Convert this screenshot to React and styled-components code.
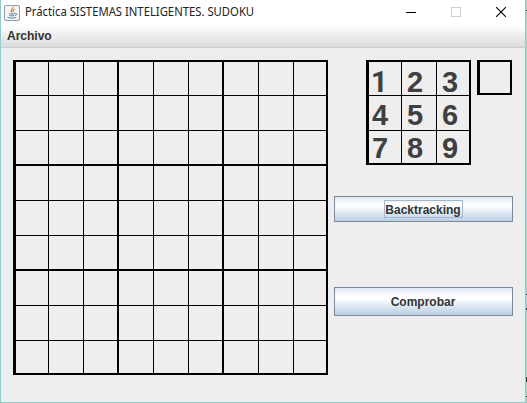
import React from "react";
import styled, { createGlobalStyle } from "styled-components";

const Global = createGlobalStyle`
  * { box-sizing: border-box; }
  body { margin: 0; background: #fff; overflow: hidden; }
`;
const Desktop = styled.div`
  width: 527px; height: 403px; display: flex; background: #a9cfca;
  font-family: "Liberation Sans", Arial, sans-serif;
`;
const DesktopEdge = styled.svg`
  display: block; flex: none;
`;
const Window = styled.main`
  width: 526px; height: 403px; display: flex; flex-direction: column; flex: none;
  background: #eeeeee; border: solid #8fcccb; border-width: 0 1px 1px 1px;
`;
const TitleBar = styled.header`
  height: 25px; display: flex; align-items: center; background: #fff; padding-left: 3px;
`;
const Title = styled.h1`
  margin: 0 0 0 5px; flex: 1; font: 400 12px/16px "Noto Sans", "Open Sans", sans-serif;
  color: #222; white-space: nowrap; padding-bottom: 1px;
  span { display: inline-block; transform-origin: 0 50%; transform: scaleX(0.94); }
`;
const Controls = styled.div`
  display: flex; gap: 35px; margin-right: 19px; height: 24px; align-items: center; align-self: flex-start;
  svg { display: block; }
`;
const MenuBar = styled.nav`
  height: 23px; padding: 3px 0 0 6px; border-bottom: 1px solid #cccccc;
  background: linear-gradient(#ffffff, #dadada);
  font-size: 12px; font-weight: 700; line-height: 17px; color: #333;
`;
const Content = styled.section`
  flex: 1; display: flex; align-items: flex-start; padding: 12px 0 0 12px;
  box-shadow: inset 2px 0 1px -1px #e2f0f1, inset -2px 0 1px -1px #e2f0f1;
`;
const Board = styled.div`
  display: grid; border: solid #000; border-width: 2px 0 0 3px; flex: none;
  grid-template-columns: 33px repeat(7, 35px) 34px;
  grid-template-rows: 34px repeat(7, 35px) 34px;
`;
const Cell = styled.div`
  border: solid #000; border-width: 0 ${p => (p.$right ? 2 : 1)}px ${p => (p.$bottom ? 2 : 1)}px 0;
`;
const Side = styled.aside`
  margin-left: 6px; width: 179px; display: flex; flex-direction: column;
`;
const Pickers = styled.div`
  display: flex; gap: 6px; padding-left: 32px; align-items: flex-start;
`;
const Palette = styled.div`
  display: grid; border: solid #000; border-width: 2px 0 0 3px;
  grid-template-columns: 33px 35px 34px; grid-template-rows: 34px 35px 34px;
`;
const Digit = styled(Cell)`
  font-family: ${p => (p.$plain ? "Roboto, " : "")}"Liberation Sans", Arial, sans-serif;
  font-size: 29px; font-weight: 700; line-height: 32px; color: #404040;
  padding: ${p => p.$drop}px 0 0 ${p => p.$indent}px; min-height: 0;
`;
const Selected = styled.div`
  width: 35px; height: 35px; border: 2px solid #000; border-left-width: 3px;
`;
const Button = styled.button`
  width: 179px; height: ${p => p.$height}px; margin-top: ${p => p.$top}px; padding: 0;
  display: flex; align-items: center; justify-content: center;
  border: 1px solid #7a8a99;
  background: linear-gradient(#dde8f3 0%, #ffffff 32%, #ffffff 38%, #b8cfe5 100%);
  font: 700 12px/15px "Liberation Sans", Arial, sans-serif; color: #333;
`;
const Label = styled.span`
  padding: ${p => (p.$focused ? 2 : 1)}px 1px 0 0; height: 18px;
  border: 1px solid ${p => (p.$focused ? "#a3b8cc" : "transparent")};
`;

const digits = [1, 2, 3, 4, 5, 6, 7, 8, 9];
const drops = [4, 3, 1];
const indents = [3, 5, 5];

const JavaIcon = () => (
  <svg width="16" height="16" viewBox="0 0 16 16" fill="none">
    <rect x=".5" y=".5" width="15" height="15" rx="1.5" fill="#f2f4f5" stroke="#8b9baa" />
    <path d="M8.8 2c1.2 1.9-3.4 2.8-1 5.4M10.6 4.2C8.6 5.3 8.7 6 9.1 7.4" stroke="#e5894a" strokeWidth="1.3" />
    <path d="M5 8.6c1.5.7 4.5.6 5.8 0M5.5 10.4c1.5.6 3.4.6 4.7 0M3.6 12.4c2.4 1 6.6.9 8.6-.1M11 8.6c2.2-.5 2.2 1.5 0 2.2" stroke="#55809f" />
  </svg>
);

export default function App() {
  return (
    <Desktop>
      <Global />
      <Window>
        <TitleBar>
          <JavaIcon />
          <Title><span>Práctica SISTEMAS INTELIGENTES. SUDOKU</span></Title>
          <Controls>
            <svg width="10" height="10"><path d="M0 5.5h10" stroke="#000" /></svg>
            <svg width="10" height="10"><rect x=".5" y=".5" width="9" height="9" fill="none" stroke="#ccc" /></svg>
            <svg width="10" height="10"><path d="M0 0L10 10M10 0L0 10" stroke="#000" strokeWidth="1.1" /></svg>
          </Controls>
        </TitleBar>
        <MenuBar>Archivo</MenuBar>
        <Content>
          <Board>
            {Array.from({ length: 81 }, (_, i) => (
              <Cell key={i} $right={i % 3 === 2} $bottom={Math.floor(i / 9) % 3 === 2} />
            ))}
          </Board>
          <Side>
            <Pickers>
              <Palette>
                {digits.map((n, i) => (
                  <Digit
                    key={n}
                    $plain={n === 1}
                    $right={i % 3 === 2}
                    $bottom={i > 5}
                    $drop={drops[Math.floor(i / 3)]}
                    $indent={n === 1 ? 2 : indents[i % 3]}
                  >
                    {n}
                  </Digit>
                ))}
              </Palette>
              <Selected />
            </Pickers>
            <Button $height={26} $top={31}><Label $focused>Backtracking</Label></Button>
            <Button $height={29} $top={65}><Label>Comprobar</Label></Button>
          </Side>
        </Content>
      </Window>
      <DesktopEdge width="1" height="403">
        <path d="M.5 10v1M.5 294v1M.5 308v2M.5 377v5M.5 396v1" stroke="#2b3a3a" />
      </DesktopEdge>
    </Desktop>
  );
}
